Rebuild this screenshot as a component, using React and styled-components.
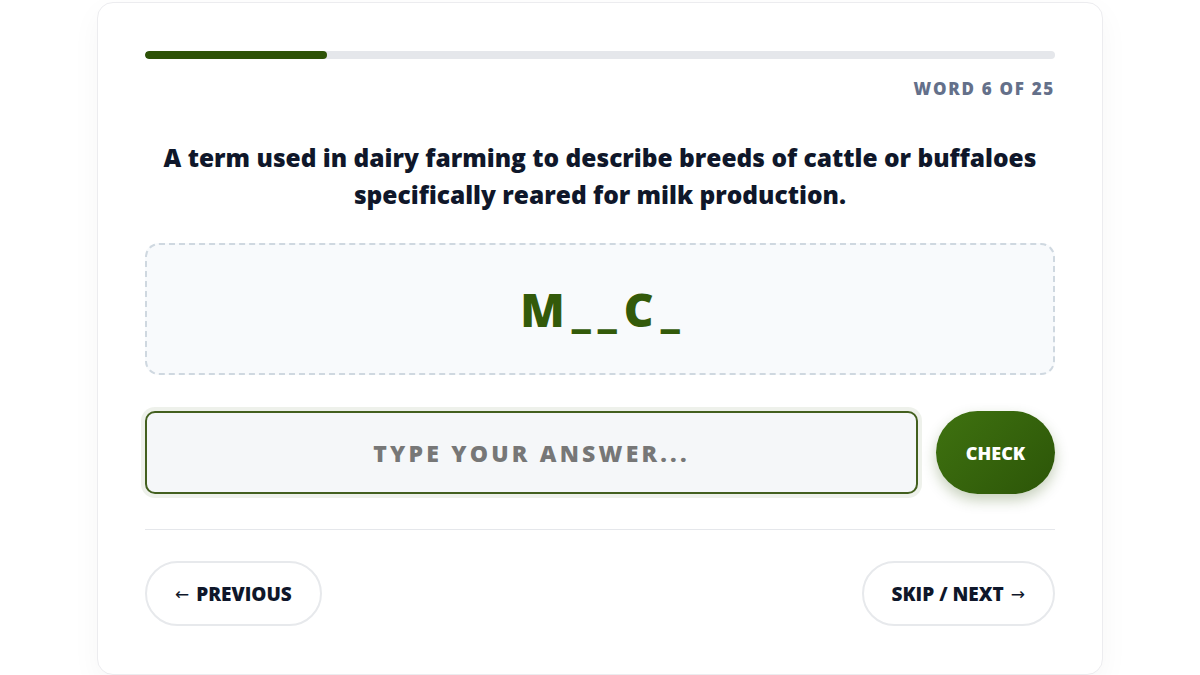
import styled, { createGlobalStyle } from 'styled-components'

const GlobalStyle = createGlobalStyle`
  body {
    margin: 0;
    background: #ffffff;
    font-family: 'Open Sans', 'Liberation Sans', sans-serif;
  }
`

const Page = styled.div`
  display: flex;
  justify-content: center;
  padding-top: 2px;
`

const Card = styled.div`
  box-sizing: border-box;
  width: 1006px;
  padding: 48px 47px;
  background: #ffffff;
  border: 1px solid #ececef;
  border-radius: 16px;
  box-shadow: 0 10px 30px rgba(15, 23, 42, 0.04);
`

const Track = styled.div`
  height: 8px;
  border-radius: 4px;
  background: #e5e7eb;
  overflow: hidden;
`

const Fill = styled.div`
  height: 100%;
  border-radius: 4px;
  background: #2d5207;
`

const Counter = styled.div`
  margin-top: 20px;
  text-align: right;
  font-size: 17px;
  line-height: 20px;
  font-weight: 800;
  letter-spacing: 1.7px;
  color: #64708a;
`

const Question = styled.h2`
  margin: 40px 0 30px;
  text-align: center;
  font-size: 24.5px;
  line-height: 37px;
  font-weight: 800;
  color: #0f172a;
`

const HintBox = styled.div`
  height: 132px;
  box-sizing: border-box;
  display: flex;
  align-items: center;
  justify-content: center;
  background: #f8fafc;
  border: 2px dashed #cfd8e0;
  border-radius: 14px;
`

const Hint = styled.div`
  display: flex;
  align-items: baseline;
  gap: 7px;
  color: #335a0a;
  font-weight: 800;
`

const Letter = styled.span`
  font-size: ${({ $blank }) => ($blank ? '38px' : '46px')};
  line-height: 1;
`

const AnswerRow = styled.div`
  display: flex;
  align-items: center;
  gap: 18px;
  margin-top: 36px;
`

const AnswerInput = styled.input`
  flex: 1;
  box-sizing: border-box;
  height: 83px;
  padding: 0 20px;
  border: 2px solid #43601f;
  border-radius: 10px;
  background: #f5f7f9;
  box-shadow: 0 0 0 4px rgba(67, 96, 31, 0.09);
  outline: none;
  text-align: center;
  font-family: inherit;
  font-size: 23px;
  font-weight: 800;
  letter-spacing: 3.2px;
  color: #1f2937;
  &::placeholder {
    color: #777777;
    text-transform: uppercase;
  }
`

const CheckButton = styled.button`
  width: 119px;
  height: 83px;
  border: none;
  border-radius: 42px;
  background: linear-gradient(135deg, #3f7210 0%, #2c5508 100%);
  box-shadow: 0 6px 14px rgba(45, 82, 7, 0.28);
  color: #ffffff;
  font-family: inherit;
  font-size: 18px;
  font-weight: 800;
  cursor: pointer;
`

const Divider = styled.hr`
  margin: 35px 0 31px;
  border: none;
  border-top: 1px solid #e5e7eb;
`

const NavRow = styled.div`
  display: flex;
  justify-content: space-between;
`

const NavButton = styled.button`
  display: flex;
  align-items: center;
  gap: 7px;
  height: 65px;
  padding: 0 28px;
  border: 2px solid #e7e9ec;
  border-radius: 33px;
  background: #ffffff;
  color: #0f172a;
  font-family: inherit;
  font-size: 19px;
  font-weight: 800;
  cursor: pointer;
`

const Arrow = styled.span`
  font-family: 'DejaVu Sans', sans-serif;
  font-weight: 400;
  font-size: 17px;
`

const pattern = ['M', '_', '_', 'C', '_']

export default function App() {
  const progress = 20

  return (
    <>
      <GlobalStyle />
      <Page>
        <Card>
          <Track>
            <Fill style={{ width: `${progress}%` }} />
          </Track>
          <Counter>WORD 6 OF 25</Counter>
          <Question>
            A term used in dairy farming to describe breeds of cattle or buffaloes
            <br />
            specifically reared for milk production.
          </Question>
          <HintBox>
            <Hint>
              {pattern.map((ch, i) => (
                <Letter key={i} $blank={ch === '_'}>
                  {ch}
                </Letter>
              ))}
            </Hint>
          </HintBox>
          <AnswerRow>
            <AnswerInput placeholder="Type your answer..." />
            <CheckButton>CHECK</CheckButton>
          </AnswerRow>
          <Divider />
          <NavRow>
            <NavButton>
              <Arrow>←</Arrow> PREVIOUS
            </NavButton>
            <NavButton>
              SKIP / NEXT <Arrow>→</Arrow>
            </NavButton>
          </NavRow>
        </Card>
      </Page>
    </>
  )
}
